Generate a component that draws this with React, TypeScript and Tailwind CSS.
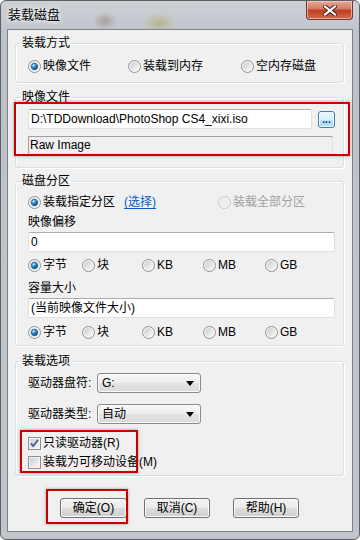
import type { ReactNode } from "react";

const font = "font-['Liberation_Sans','Noto_Sans_CJK_SC',sans-serif]";

const Radio = ({ checked, disabled }: { checked?: boolean; disabled?: boolean }) => {
  return (
    <svg width="13" height="13" viewBox="0 0 13 13" className="shrink-0">
      <defs>
        <linearGradient id="rIn" x1="0" y1="0" x2="1" y2="1">
          <stop offset="0" stopColor="#c9cbcd" />
          <stop offset="1" stopColor="#fbfbfb" />
        </linearGradient>
        <linearGradient id="rDot" x1="0" y1="0" x2="0.6" y2="1">
          <stop offset="0" stopColor="#a6dcff" />
          <stop offset="0.55" stopColor="#2d8fd6" />
          <stop offset="1" stopColor="#0d4f86" />
        </linearGradient>
      </defs>
      <circle cx="6.5" cy="6.5" r="6" fill={disabled ? "#f4f4f4" : "#f6f6f6"} stroke={disabled ? "#c6c6c6" : "#8e8f8f"} />
      <circle cx="6.5" cy="6.5" r="4.4" fill={disabled ? "#eeeeee" : "url(#rIn)"} />
      {checked && (
        <>
          <circle cx="6.5" cy="6.5" r="3.2" fill="url(#rDot)" stroke="#1a4f7a" strokeWidth="0.8" />
          <circle cx="5.7" cy="5.5" r="1.1" fill="#c9ecff" opacity="0.9" />
        </>
      )}
    </svg>
  );
};

const Check = ({ checked }: { checked?: boolean }) => {
  return (
    <svg width="13" height="13" viewBox="0 0 13 13" className="shrink-0">
      <defs>
        <linearGradient id="cIn" x1="0" y1="0" x2="1" y2="1">
          <stop offset="0" stopColor="#cbcfd5" />
          <stop offset="1" stopColor="#f7f7f7" />
        </linearGradient>
      </defs>
      <rect x="0.5" y="0.5" width="12" height="12" fill="#f4f4f4" stroke="#8e8f8f" />
      <rect x="2" y="2" width="9" height="9" fill="url(#cIn)" />
      {checked && <path d="M3 6.3 L5.3 9 L10 2.8" fill="none" stroke="#4a5c96" strokeWidth="1.8" />}
    </svg>
  );
};

const Option = ({ label, checked, disabled, width }: { label: string; checked?: boolean; disabled?: boolean; width: string }) => {
  return (
    <div className={`flex items-center gap-[2px] ${width}`}>
      <Radio checked={checked} disabled={disabled} />
      <span className={disabled ? "text-[#a0a0a0]" : ""}>{label}</span>
    </div>
  );
};

const Units = () => {
  return (
    <div className="flex h-[16px] items-center">
      <Option width="w-[54px]" label="字节" checked />
      <Option width="w-[60px]" label="块" />
      <Option width="w-[61px]" label="KB" />
      <Option width="w-[62px]" label="MB" />
      <Option width="w-[60px]" label="GB" />
    </div>
  );
};

const Group = ({ title, children, className }: { title: string; children: ReactNode; className?: string }) => {
  return (
    <fieldset className={`ml-[7px] w-[329px] rounded-[3px] border border-[#d5dfe5] shadow-[inset_1px_1px_0_#ffffff,1px_1px_0_#ffffff] ${className ?? ""}`}>
      <legend className="ml-[5px] px-[1px] leading-[16px]">{title}</legend>
      {children}
    </fieldset>
  );
};

const TextBox = ({ value, width }: { value: string; width: string }) => {
  return (
    <div className={`flex h-[20px] items-center rounded-[2px] border border-[#dbdfe6] border-t-[#abadb3] bg-white pl-[2px] ${width}`}>
      {value}
    </div>
  );
};

const Combo = ({ value }: { value: string }) => {
  return (
    <div className="flex h-[20px] w-[104px] items-center justify-between rounded-[3px] border border-[#8a8a8a] bg-[linear-gradient(#f7f7f7,#ededed_50%,#e4e4e4_50%,#dadada)] pl-[4px] pr-[6px] shadow-[inset_0_0_0_1px_#fbfbfb]">
      <span>{value}</span>
      <svg width="8" height="5" viewBox="0 0 8 5">
        <path d="M0 0 H8 L4 5 Z" fill="#000" />
      </svg>
    </div>
  );
};

const Button = ({ label, className }: { label: string; className?: string }) => {
  return (
    <button className={`h-[20px] rounded-[3px] border border-[#707070] bg-[linear-gradient(#f2f2f2,#ebebeb_50%,#dddddd_50%,#cfcfcf)] text-[12px] leading-[16px] text-black shadow-[inset_0_0_0_1px_#fcfcfc] ${className ?? ""}`}>
      {label}
    </button>
  );
};

export default function App() {
  return (
    <div className={`relative h-[540px] w-[360px] overflow-hidden bg-white text-[12px] leading-[16px] text-black ${font}`}>
      <div className="flex h-[540px] w-[360px] flex-col rounded-t-[6px] rounded-b-[6px] border border-[#5b6066] bg-[radial-gradient(ellipse_12px_9px_at_104px_20px,rgba(120,80,70,0.35),transparent),radial-gradient(ellipse_16px_10px_at_158px_22px,rgba(170,160,70,0.5),transparent),linear-gradient(#ccd1d6,#bcc2c8_40px,#c2c6ca)]">
        {/* title bar */}
        <div className="flex h-[28px] items-start justify-between">
          <span className="pl-[7px] pt-[6px] text-[13px] [text-shadow:0_0_6px_#ffffff,0_0_3px_#ffffff]">装载磁盘</span>
          <div className="mr-[6px] flex h-[19px] w-[47px] items-center justify-center rounded-b-[4px] border border-t-0 border-[#6b3a33] bg-[linear-gradient(#e9a899,#d27a63_45%,#c13c22_50%,#d36a4a)] shadow-[inset_0_0_0_1px_rgba(255,220,210,0.6)]">
            <svg width="14" height="11" viewBox="0 0 14 11">
              <path d="M2 1.5 L12 9.5 M12 1.5 L2 9.5" stroke="#3a1d18" strokeWidth="4" strokeLinecap="square" />
              <path d="M2 1.5 L12 9.5 M12 1.5 L2 9.5" stroke="#ffffff" strokeWidth="2.2" strokeLinecap="square" />
            </svg>
          </div>
        </div>

        {/* client area */}
        <div className="mx-[6px] h-[503px] border border-[#7c8389] bg-[#f0f0f0]">
          <Group title="装载方式" className="mt-[5px]">
            <div className="flex h-[16px] items-center pl-[12px] pt-0 mt-[7px] mb-[8px]">
              <Option width="w-[100px]" label="映像文件" checked />
              <Option width="w-[113px]" label="装载到内存" />
              <Option width="w-[90px]" label="空内存磁盘" />
            </div>
          </Group>

          <Group title="映像文件" className="mt-[6px]">
            <div className="pl-[12px] pt-[4px] pb-[13px]">
              <div className="flex items-center">
                <TextBox width="w-[284px]" value="D:\TDDownload\PhotoShop CS4_xixi.iso" />
                <div className="ml-[6px] flex h-[17px] w-[17px] items-end justify-center rounded-[3px] border border-[#3c7fb1] bg-[linear-gradient(#eaf6fd,#d9f0fc_50%,#bee6fd_50%,#a7d9f5)] pb-[2px] text-[10px] leading-[10px] font-bold text-[#1d2f5c] shadow-[inset_0_0_0_1px_#f4fbff]">
                  ...
                </div>
              </div>
              <div className="mt-[7px] flex h-[18px] w-[305px] items-center border border-[#a0a0a0] border-r-[#e3e3e3] border-b-[#e3e3e3] pl-[1px]">
                Raw Image
              </div>
            </div>
          </Group>

          <Group title="磁盘分区" className="mt-[5px]">
            <div className="pl-[12px] pt-[5px] pb-[5px]">
              <div className="flex h-[16px] items-center">
                <div className="flex w-[190px] items-center gap-[2px]">
                  <Radio checked />
                  <span>装载指定分区</span>
                  <span className="ml-[7px] text-[#0a5bc4] underline underline-offset-2">(选择)</span>
                </div>
                <Option width="w-[100px]" label="装载全部分区" disabled />
              </div>
              <div className="mt-[4px] h-[16px]">映像偏移</div>
              <div className="mt-[2px]">
                <TextBox width="w-[307px]" value="0" />
              </div>
              <div className="mt-[5px]">
                <Units />
              </div>
              <div className="mt-[7px] h-[16px]">容量大小</div>
              <div className="mt-[2px]">
                <TextBox width="w-[307px]" value="(当前映像文件大小)" />
              </div>
              <div className="mt-[6px]">
                <Units />
              </div>
            </div>
          </Group>

          <Group title="装载选项" className="mt-[7px]">
            <div className="pl-[12px] pt-[4px] pb-[5px]">
              <div className="flex items-center">
                <span className="w-[69px]">驱动器盘符:</span>
                <Combo value="G:" />
              </div>
              <div className="mt-[11px] flex items-center">
                <span className="w-[69px]">驱动器类型:</span>
                <Combo value="自动" />
              </div>
              <div className="mt-[11px] flex h-[16px] items-center gap-[2px]">
                <Check checked />
                <span>只读驱动器(R)</span>
              </div>
              <div className="mt-[3px] flex h-[16px] items-center gap-[2px]">
                <Check />
                <span>装载为可移动设备(M)</span>
              </div>
            </div>
          </Group>

          <div className="mt-[22px] flex pl-[52px]">
            <Button label="确定(O)" className="w-[67px]" />
            <Button label="取消(C)" className="ml-[17px] w-[66px]" />
            <Button label="帮助(H)" className="ml-[23px] w-[66px]" />
          </div>
        </div>
      </div>

      {/* red highlight marks drawn over the dialog */}
      <div className="absolute left-[14px] top-[102px] h-[54px] w-[336px] border-2 border-[#c80000] shadow-[0_0_3px_rgba(0,0,0,0.35)]" />
      <div className="absolute left-[20px] top-[430px] h-[43px] w-[118px] border-2 border-[#c80000] shadow-[0_0_3px_rgba(0,0,0,0.35)]" />
      <div className="absolute left-[46px] top-[489px] h-[35px] w-[82px] border-2 border-[#c80000] shadow-[0_0_3px_rgba(0,0,0,0.35)]" />
    </div>
  );
}
